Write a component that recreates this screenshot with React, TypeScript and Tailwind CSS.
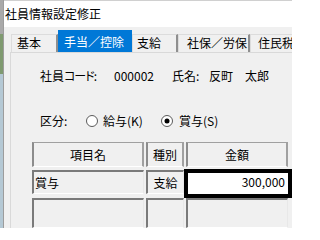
import React from "react";

function Radio({ checked }: { checked?: boolean }) {
  return (
    <svg width="12" height="12" viewBox="0 0 12 12" className="shrink-0">
      <circle cx="6" cy="6" r="5.5" fill="#ffffff" stroke="#5a5a5a" strokeWidth="1" />
      {checked && <circle cx="6" cy="6" r="2.5" fill="#000000" />}
    </svg>
  );
}

export default function App() {
  const head =
    "h-full shrink-0 flex items-center justify-center border-t border-l-2 border-r-2 border-b border-t-[#a0a0a0] border-l-[#8c8c8c] border-r-[#a0a0a0] border-b-[#ffffff] bg-[#f0f0f0]";
  const cell =
    "h-full shrink-0 flex items-center border-t-2 border-l-2 border-r border-b border-t-[#7a7a7a] border-l-[#7a7a7a] border-r-[#e8e8e8] border-b-[#ffffff] bg-[#f0f0f0]";
  const tab =
    "h-[18px] shrink-0 flex items-center pb-[2px] border-t border-l border-r-2 border-t-[#dcdcdc] border-l-[#dcdcdc] border-r-[#8f8f8f] bg-[#f0f0f0] whitespace-nowrap overflow-hidden";
  return (
    <div className="w-[292px] h-[228px] overflow-hidden flex bg-[#f0f0f0] font-['Noto_Sans_CJK_JP',sans-serif] text-[12px] leading-[16px] text-black">
      <div className="w-[3px] flex flex-col shrink-0">
        <div className="h-[34px] bg-[#a9a9a9]" />
        <div className="h-[40px] bg-[#7f9a70]" />
        <div className="flex-1 bg-[#b4c8d4]" />
      </div>
      <div className="flex-1 min-w-0 flex flex-col border-l border-l-[#9c9c9c] overflow-hidden">
        <div className="h-[1px] bg-[#d0d0d0]" />
        <div className="h-[31px] bg-white pl-[1px] pt-[5px] whitespace-nowrap">社員情報設定修正</div>
        <div className="flex-1 flex flex-col pl-[6px]">
          <div className="flex items-end h-[22px] mt-[3px] pl-[1px]">
            <div className={`${tab} w-[47px] pl-[5px] border-r-0`}>基本</div>
            <div className="w-[74px] h-[22px] shrink-0 flex items-center pt-[2px] pl-[6px] bg-[#0078d7] text-white whitespace-nowrap">
              手当／控除
            </div>
            <div className={`${tab} w-[46px] pl-[4px]`}>支給</div>
            <div className={`${tab} w-[72px] pl-[8px]`}>社保／労保</div>
            <div className={`${tab} w-[60px] pl-[7px] border-r-0`}>住民税</div>
          </div>
          <div className="flex-1 flex flex-col border-t border-l border-[#d9d9d9]">
            <div className="flex mt-[15px] pl-[29px] whitespace-nowrap">
              <span className="w-[74px] shrink-0">
                社員<span className="[font-feature-settings:'palt'] tracking-[-1px]">コード</span>:
              </span>
              <span className="w-[58px] shrink-0">000002</span>
              <span className="w-[37px] shrink-0">氏名:</span>
              <span>反町　太郎</span>
            </div>
            <div className="flex items-center h-[16px] mt-[29px] pl-[29px] whitespace-nowrap">
              <span className="w-[46px] shrink-0">区分:</span>
              <Radio />
              <span className="ml-[5px] w-[58px] shrink-0">給与(K)</span>
              <Radio checked />
              <span className="ml-[6px]">賞与(S)</span>
            </div>
            <div className="flex flex-col mt-[13px] pl-[21px]">
              <div className="flex h-[25px] gap-[2px]">
                <div className={`${head} w-[112px]`}>項目名</div>
                <div className={`${head} w-[38px]`}>種別</div>
                <div className={`${head} w-[102px]`}>金額</div>
              </div>
              <div className="flex h-[24px] mt-[3px] items-start">
                <div className={`${cell} w-[112px] pl-[1px]`}>賞与</div>
                <div className={`${cell} w-[38px] ml-[2px] justify-center`}>支給</div>
                <div className="w-[108px] h-[29px] -mt-[1px] shrink-0 border-4 border-black bg-white flex justify-end pr-[3px] pt-[1px] relative z-10">
                  300,000
                </div>
              </div>
              <div className="flex h-[30px] mt-[4px] gap-[2px]">
                <div className={`${cell} w-[112px]`} />
                <div className={`${cell} w-[38px]`} />
                <div className={`${cell} w-[102px]`} />
              </div>
            </div>
          </div>
        </div>
      </div>
    </div>
  );
}
